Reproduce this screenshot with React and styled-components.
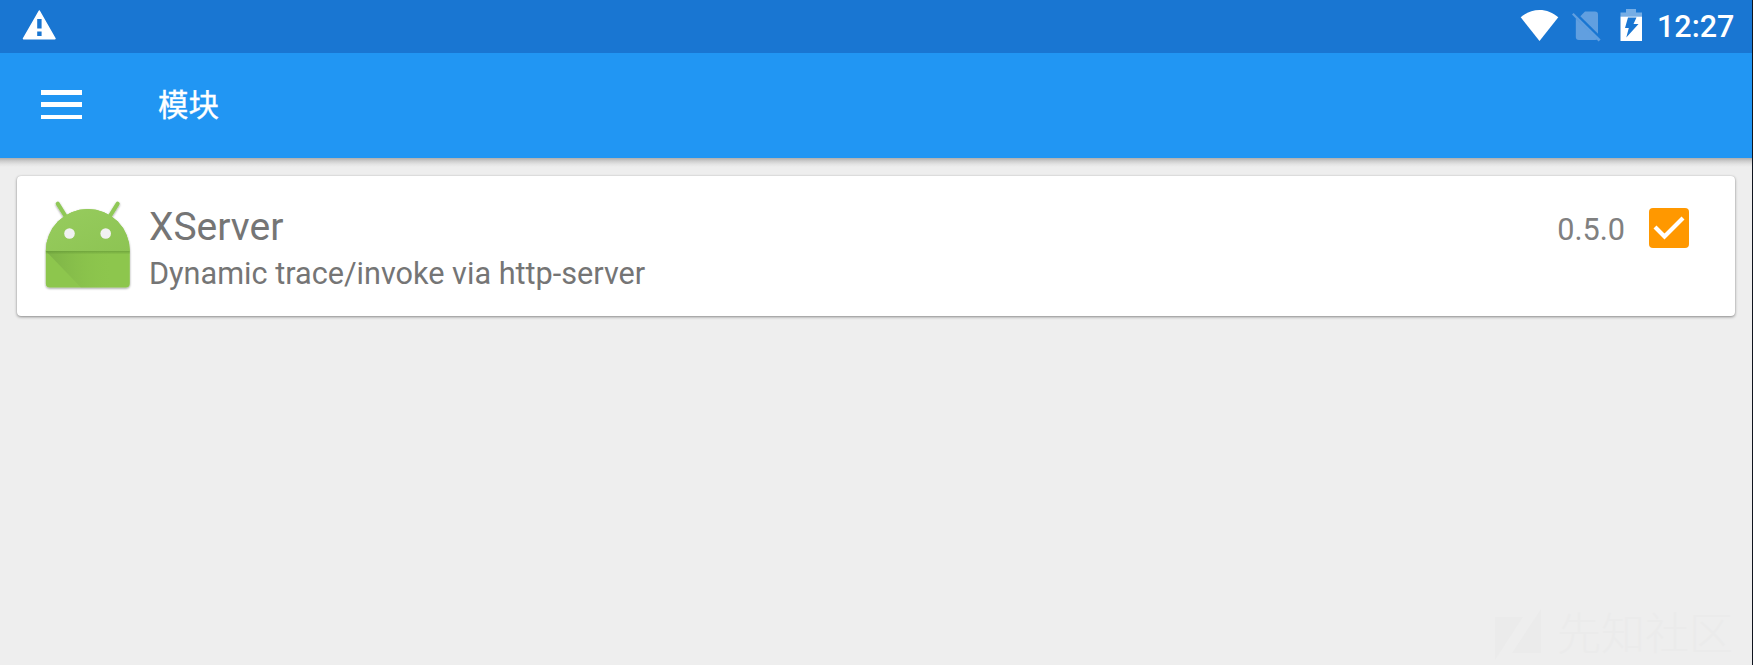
import React from 'react';
import styled, { createGlobalStyle } from 'styled-components';

const Global = createGlobalStyle`
  * { box-sizing: border-box; }
  body { margin: 0; background: #eee; }
`;

const Screen = styled.div`
  position: relative;
  display: flex;
  flex-direction: column;
  width: 1753px;
  height: 665px;
  overflow: hidden;
  background: #eee;
  border-right: 1px solid #10151f;
  font-family: Roboto, 'Noto Sans CJK SC', sans-serif;
`;

const StatusBar = styled.header`
  display: flex;
  align-items: flex-start;
  flex: none;
  height: 53px;
  padding: 0 17px 0 20px;
  background: #1976d2;
  color: #fff;
`;

const StatusIcons = styled.div`
  display: flex;
  margin-left: auto;
`;

const Glyph = styled.svg`
  display: block;
  flex: none;
`;

const Clock = styled.time`
  width: 78px;
  margin-left: 7px;
  padding-top: 9px;
  font-size: 30.5px;
  font-weight: 500;
  line-height: 36px;
  white-space: nowrap;
`;

const AppBar = styled.nav`
  position: relative;
  display: flex;
  align-items: center;
  flex: none;
  height: 105px;
  padding: 0 0 2px 41px;
  background: #2196f3;
  color: #fff;
  &::after {
    content: '';
    position: absolute;
    top: 100%;
    left: 0;
    right: 0;
    height: 9px;
    background: linear-gradient(#aeaeae, #cecece 35%, #e4e4e4 70%, #eee);
  }
`;

const MenuButton = styled.button`
  display: flex;
  flex-direction: column;
  justify-content: space-between;
  width: 41px;
  height: 29px;
  padding: 0;
  border: 0;
  background: none;
`;

const MenuLine = styled.span`
  height: 4.5px;
  background: #fff;
`;

const Title = styled.h1`
  margin: 0 0 4px 76px;
  font: 400 30.4px/40px 'Noto Sans CJK SC', sans-serif;
  -webkit-text-stroke: 0.4px #fff;
`;

const Card = styled.article`
  display: flex;
  flex: none;
  height: 140px;
  margin: 17.5px 17px 0;
  padding: 24.5px 46px 0 27px;
  border-radius: 4px;
  background: #fff;
  box-shadow: 0 1px 3px rgba(0, 0, 0, 0.42), 0 0 1px rgba(0, 0, 0, 0.18);
`;

const Details = styled.div`
  flex: 1;
  padding: 4px 0 0 17px;
  color: #757575;
`;

const Name = styled.h2`
  margin: 0;
  font-size: 39px;
  font-weight: 400;
  line-height: 46px;
`;

const Description = styled.p`
  margin: 6px 0 0;
  font-size: 30.65px;
  line-height: 36px;
`;

const Version = styled.span`
  padding: 12px 24px 0 0;
  color: #808080;
  font-size: 30.65px;
  line-height: 36px;
`;

const Checkbox = styled.span`
  width: 40px;
  height: 40px;
  margin-top: 8px;
  border-radius: 4px;
  background: #ff9800;
`;

const Watermark = styled.div`
  position: absolute;
  right: 19px;
  bottom: 1px;
  display: flex;
  align-items: flex-start;
  gap: 15px;
  height: 66px;
  color: #ebebeb;
  font: 300 44px/66px 'Noto Sans CJK SC', sans-serif;
`;

const Warning = () => (
  <Glyph width="38" height="46" viewBox="0 0 38 46">
    <path fill="#fff" stroke="#fff" strokeWidth="1.5" strokeLinejoin="round" d="M19.3 11 35 38.7H3.5Z" />
    <path fill="#1976d2" d="M17.2 19h4.4v9.5h-4.4zM17.2 31.5h4.4V36h-4.4z" />
  </Glyph>
);

const Wifi = () => (
  <Glyph width="42" height="46" viewBox="1518 0 42 46">
    <path fill="#fff" d="M1539.5 41 1520.7 17.3C1526 12.7 1532.5 10 1539.5 10s13.500 2.700 18.800 7.300Z" />
  </Glyph>
);

const NoSim = () => (
  <Glyph width="50" height="46" viewBox="1560 0 50 46">
    <g fill="#619fe0">
      <path d="M1580.300 16.200 1585 11.500h10a3 3 0 0 1 3 3v19.300Z" />
      <path d="M1575.800 18.200 1597.300 39.300Q1596.500 40 1595.300 40h-16.500a3 3 0 0 1-3-3Z" />
      <path d="m1573.600 13 27 26.600-2 2-26.600-27Z" />
    </g>
  </Glyph>
);

const Battery = () => (
  <Glyph width="40" height="46" viewBox="1610 0 40 46">
    <path fill="#75ade5" d="M1626 9h10v3.500h6V17h-21.500v-4.500h5.500z" />
    <path fill="#fff" d="M1620.500 16.700H1642V41h-21.500z" />
    <path fill="#1976d2" d="M1628 17.500h8.500l-3 6.500h5L1626.300 37.500l2.500-9.500h-3.800Z" />
  </Glyph>
);

const AndroidRobot = () => (
  <Glyph width="88" height="96" viewBox="44 200 88 96">
    <defs>
      <linearGradient id="fold" x1="0" y1="0" x2="1" y2="0">
        <stop offset="0" stopColor="#71a342" />
        <stop offset="1" stopColor="#8bc34a" stopOpacity="0" />
      </linearGradient>
      <linearGradient id="head" x1="0" y1="0" x2="1" y2="1">
        <stop offset="0" stopColor="#97cc5e" />
        <stop offset="1" stopColor="#8dc453" />
      </linearGradient>
      <linearGradient id="seam" x1="0" y1="0" x2="0" y2="1">
        <stop offset="0" stopColor="#5f9233" stopOpacity=".6" />
        <stop offset="1" stopColor="#5f9233" stopOpacity="0" />
      </linearGradient>
      <filter id="drop" x="-10%" y="-10%" width="120%" height="120%">
        <feDropShadow dx="0" dy="1" stdDeviation=".8" floodOpacity=".4" />
      </filter>
    </defs>
    <g filter="url(#drop)">
      <path stroke="#8fc857" strokeWidth="4" strokeLinecap="round" d="m57.700 203.600 9 14.400M117.700 203.600l-9 14.400" />
      <path fill="#8dc64e" d="M45.800 251a42 42 0 0 1 84 0v32.500a4 4 0 0 1-4 4h-76a4 4 0 0 1-4-4Z" />
    </g>
    <path fill="url(#head)" d="M45.800 251a42 42 0 0 1 84 0Z" />
    <path fill="url(#fold)" d="M45.800 251h66v36.500H81Z" opacity=".6" />
    <path fill="url(#seam)" d="M45.800 251h84v3.500h-84z" />
    <circle cx="69.500" cy="233.500" r="5.300" fill="#f1f1f1" />
    <circle cx="105.700" cy="233.500" r="5.300" fill="#f1f1f1" />
  </Glyph>
);

export default function App() {
  return (
    <>
      <Global />
      <Screen>
        <StatusBar>
          <Warning />
          <StatusIcons>
            <Wifi />
            <NoSim />
            <Battery />
          </StatusIcons>
          <Clock>12:27</Clock>
        </StatusBar>
        <AppBar>
          <MenuButton aria-label="菜单">
            <MenuLine />
            <MenuLine />
            <MenuLine />
          </MenuButton>
          <Title>模块</Title>
        </AppBar>
        <Card>
          <AndroidRobot />
          <Details>
            <Name>XServer</Name>
            <Description>Dynamic trace/invoke via http-server</Description>
          </Details>
          <Version>0.5.0</Version>
          <Checkbox role="checkbox" aria-checked="true">
            <Glyph width="40" height="40" viewBox="0 0 40 40">
              <path d="m6 19 9.500 9.500L34 10" fill="none" stroke="#fff" strokeWidth="4.200" />
            </Glyph>
          </Checkbox>
        </Card>
        <Watermark>
          <Glyph width="47" height="66" viewBox="0 0 47 66">
            <path fill="currentColor" d="M0 19h28L0 62ZM46 11v44H17Z" />
          </Glyph>
          先知社区
        </Watermark>
      </Screen>
    </>
  );
}
